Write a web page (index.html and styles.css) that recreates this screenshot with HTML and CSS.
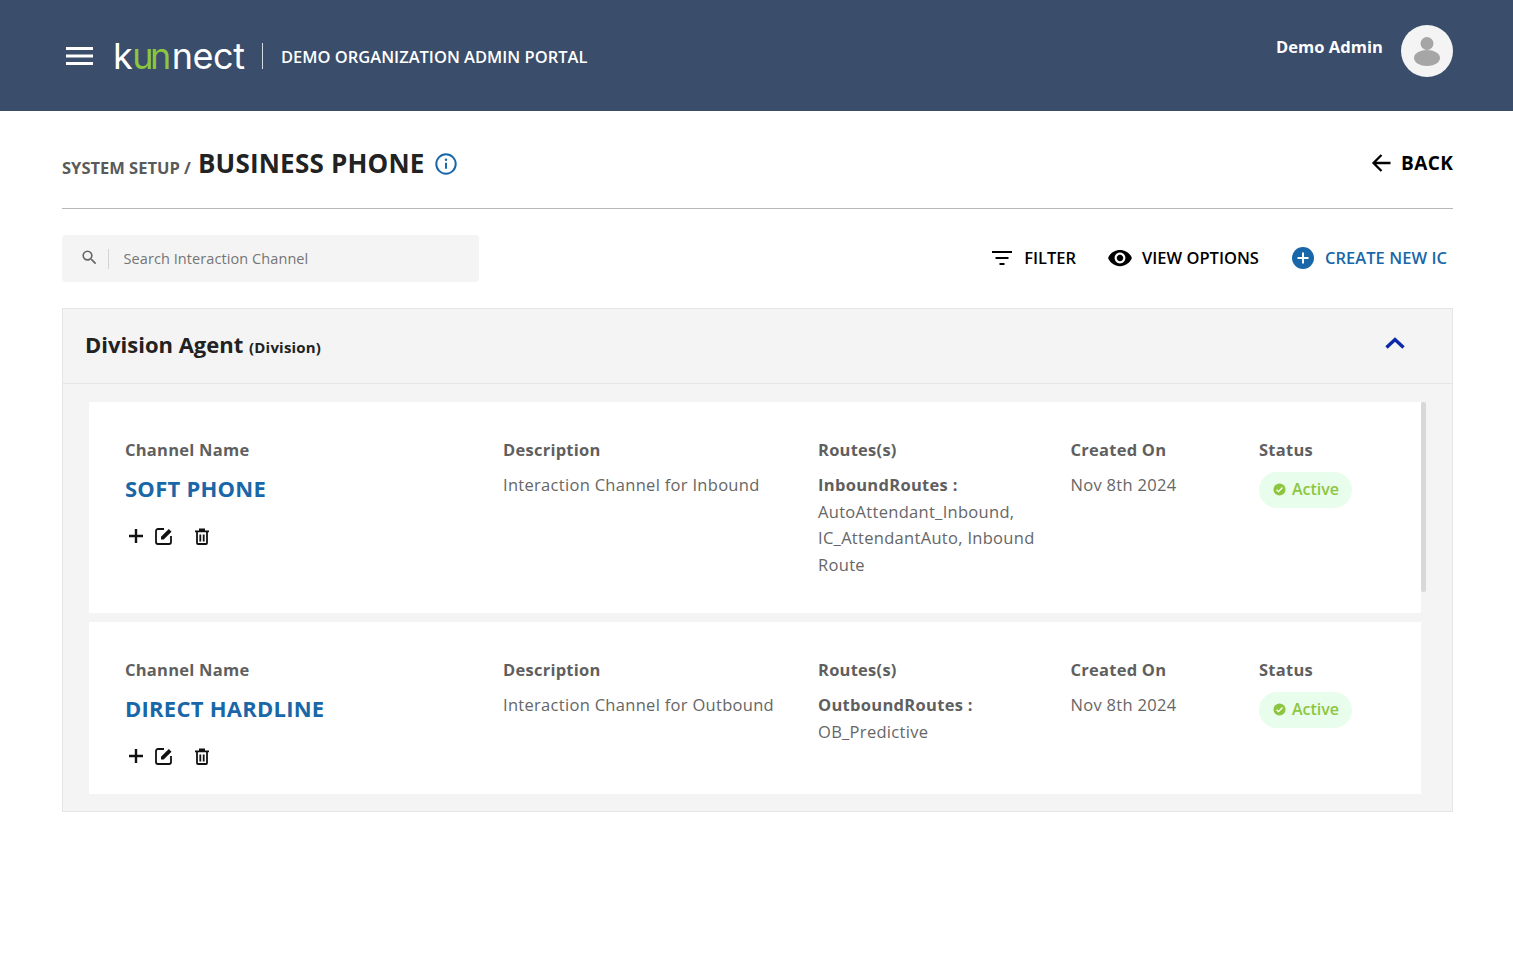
FILE: index.html
```html
<!DOCTYPE html>
<html lang="en">
<head>
<meta charset="utf-8">
<title>Business Phone</title>
<link rel="stylesheet" href="styles.css">
</head>
<body>
<header class="topbar">
  <div class="brand">
    <svg class="menu-icon" viewBox="0 0 27 18"><path d="M0 1.500h27M0 9h27M0 16.500h27" stroke="#fff" stroke-width="3"/></svg>
    <span class="logo">k<span class="logo-green">u<span class="logo-join">n</span></span><span class="logo-rest">nect</span></span>
    <span class="brand-divider"></span>
    <span class="portal">DEMO ORGANIZATION ADMIN PORTAL</span>
  </div>
  <div class="user">
    <span class="user-name">Demo Admin</span>
    <span class="avatar">
      <svg viewBox="0 0 52 52" width="52" height="52"><circle cx="26" cy="18.500" r="6.500" fill="#a6a6a6"/><ellipse cx="26" cy="33" rx="13" ry="8" fill="#a6a6a6"/></svg>
    </span>
  </div>
</header>
<main class="page">
  <section class="title-row">
    <h1 class="title"><span class="crumb">SYSTEM SETUP /</span> <span class="title-main">BUSINESS PHONE</span>
      <svg class="info-icon" viewBox="0 0 22 22"><circle cx="11" cy="11" r="9.700" fill="none" stroke="#1967a8" stroke-width="2"/><path d="M11 9.800v6" stroke="#1967a8" stroke-width="2"/><circle cx="11" cy="6.700" r="1.200" fill="#1967a8"/></svg>
    </h1>
    <a class="back">
      <svg class="back-icon" viewBox="0 0 20 20"><path d="M19.500 10H2.500M10.500 2l-8 8 8 8" fill="none" stroke="#000" stroke-width="2.300"/></svg>
      BACK
    </a>
  </section>
  <section class="toolbar">
    <div class="search">
      <svg class="search-icon" viewBox="0 0 24 24"><path fill="#666" d="M15.500 14h-.79l-.28-.27A6.470 6.470 0 0 0 16 9.500 6.500 6.500 0 1 0 9.500 16c1.610 0 3.090-.59 4.230-1.570l.27.28v.79l5 4.990L20.490 19l-4.990-5zm-6 0C7.010 14 5 11.990 5 9.500S7.010 5 9.500 5 14 7.010 14 9.500 11.990 14 9.500 14z"/></svg>
      <span class="search-sep"></span>
      <span class="search-text">Search Interaction Channel</span>
    </div>
    <div class="actions">
      <a class="action">
        <svg class="action-icon-filter" viewBox="0 0 20 14"><path d="M0 1h20M3.500 7h13M7.500 13h5" stroke="#000" stroke-width="2"/></svg>
        FILTER
      </a>
      <a class="action">
        <svg class="action-icon-eye" viewBox="0 0 24 24"><path d="M12 4.500C7 4.500 2.730 7.610 1 12c1.730 4.390 6 7.500 11 7.500s9.270-3.110 11-7.500c-1.730-4.390-6-7.500-11-7.500zM12 17c-2.760 0-5-2.240-5-5s2.240-5 5-5 5 2.240 5 5-2.240 5-5 5zm0-8c-1.660 0-3 1.340-3 3s1.340 3 3 3 3-1.340 3-3-1.340-3-3-3z"/></svg>
        VIEW OPTIONS
      </a>
      <a class="action action-primary">
        <svg class="action-icon-plus" viewBox="0 0 22 22"><circle cx="11" cy="11" r="11" fill="#1967a8"/><path d="M11 5.500v11M5.500 11h11" stroke="#fff" stroke-width="2"/></svg>
        CREATE NEW IC
      </a>
    </div>
  </section>
  <section class="panel">
    <div class="panel-head">
      <h2 class="panel-title">Division Agent <small class="panel-sub">(Division)</small></h2>
      <svg class="chevron" viewBox="0 0 20 12"><path d="M1.500 10.500 10 2.500l8.500 8" fill="none" stroke="#0a2aa8" stroke-width="3.400"/></svg>
    </div>
    <div class="panel-body">
      <span class="scroll-thumb"></span>
      <article class="card card-tall">
        <div class="col">
          <div class="label">Channel Name</div>
          <div class="channel">SOFT PHONE</div>
          <div class="row-icons">
            <svg class="ic-plus" viewBox="0 0 16 16"><path d="M8 1v14M1 8h14" stroke="#111" stroke-width="2.400"/></svg>
            <svg class="ic-edit" viewBox="0 0 18 18"><path d="M9 2H3a2 2 0 0 0-2 2v11a2 2 0 0 0 2 2h11a2 2 0 0 0 2-2V9" fill="none" stroke="#111" stroke-width="1.800"/><path d="M6 12.500V9.800L13.800 2l2.700 2.700L8.700 12.500z" fill="#111"/></svg>
            <svg class="ic-trash" viewBox="0 0 14 17"><path d="M0 2.500h14V4.300H0zM4 .5h6v2H4z" fill="#111"/><path d="M2 4v11a1 1 0 0 0 1 1h8a1 1 0 0 0 1-1V4" fill="none" stroke="#111" stroke-width="1.800"/><path d="M5.300 6.500v7M8.700 6.500v7" stroke="#111" stroke-width="1.800"/></svg>
          </div>
        </div>
        <div class="col">
          <div class="label">Description</div>
          <div class="value">Interaction Channel for Inbound</div>
        </div>
        <div class="col">
          <div class="label">Routes(s)</div>
          <div class="value"><b class="route-name">InboundRoutes :</b><br>AutoAttendant_Inbound, IC_AttendantAuto, Inbound Route</div>
        </div>
        <div class="col">
          <div class="label">Created On</div>
          <div class="value">Nov 8th 2024</div>
        </div>
        <div class="col">
          <div class="label">Status</div>
          <span class="badge">
            <svg class="badge-icon" viewBox="0 0 14 14"><circle cx="7" cy="7" r="6.500" fill="#8cc63f"/><path d="M3.800 7.200 6 9.300l4.200-4.400" fill="none" stroke="#fff" stroke-width="1.500"/></svg>
            Active
          </span>
        </div>
      </article>
      <article class="card">
        <div class="col">
          <div class="label">Channel Name</div>
          <div class="channel">DIRECT HARDLINE</div>
          <div class="row-icons">
            <svg class="ic-plus" viewBox="0 0 16 16"><path d="M8 1v14M1 8h14" stroke="#111" stroke-width="2.400"/></svg>
            <svg class="ic-edit" viewBox="0 0 18 18"><path d="M9 2H3a2 2 0 0 0-2 2v11a2 2 0 0 0 2 2h11a2 2 0 0 0 2-2V9" fill="none" stroke="#111" stroke-width="1.800"/><path d="M6 12.500V9.800L13.800 2l2.700 2.700L8.700 12.500z" fill="#111"/></svg>
            <svg class="ic-trash" viewBox="0 0 14 17"><path d="M0 2.500h14V4.300H0zM4 .5h6v2H4z" fill="#111"/><path d="M2 4v11a1 1 0 0 0 1 1h8a1 1 0 0 0 1-1V4" fill="none" stroke="#111" stroke-width="1.800"/><path d="M5.300 6.500v7M8.700 6.500v7" stroke="#111" stroke-width="1.800"/></svg>
          </div>
        </div>
        <div class="col">
          <div class="label">Description</div>
          <div class="value">Interaction Channel for Outbound</div>
        </div>
        <div class="col">
          <div class="label">Routes(s)</div>
          <div class="value"><b class="route-name">OutboundRoutes :</b><br>OB_Predictive</div>
        </div>
        <div class="col">
          <div class="label">Created On</div>
          <div class="value">Nov 8th 2024</div>
        </div>
        <div class="col">
          <div class="label">Status</div>
          <span class="badge">
            <svg class="badge-icon" viewBox="0 0 14 14"><circle cx="7" cy="7" r="6.500" fill="#8cc63f"/><path d="M3.800 7.200 6 9.300l4.200-4.400" fill="none" stroke="#fff" stroke-width="1.500"/></svg>
            Active
          </span>
        </div>
      </article>
    </div>
  </section>
</main>
</body>
</html>
```
FILE: styles.css
```css
* { box-sizing: border-box; }
html, body { margin: 0; height: 961px; overflow: hidden; }
body { font-family: "Open Sans", sans-serif; background: #fff; color: #222; }

.topbar { height: 111px; background: #3a4d6b; display: flex; justify-content: space-between; padding: 25px 60px 0 66px; color: #fff; }
.brand { display: flex; align-items: center; height: 62px; }
.menu-icon { width: 27px; height: 18px; display: block; }
.logo { font-family: Inter, sans-serif; font-weight: 400; font-size: 36px; line-height: 62px; letter-spacing: -0.5px; margin-left: 20px; width: 132px; color: #fff; white-space: nowrap; }
.logo-green { color: #8cc63f; }
.logo-join { margin-left: -3px; }
.logo-rest { margin-left: 1px; }
.brand-divider { width: 1px; height: 26px; background: #d5dae2; margin-left: 17px; }
.portal { font-size: 16.500px; font-weight: 600; margin-left: 18px; }
.user { display: flex; align-items: flex-start; }
.user-name { font-size: 16.500px; font-weight: 700; line-height: 44px; margin-right: 18px; letter-spacing: 0.05px; }
.avatar { width: 52px; height: 52px; border-radius: 50%; background: #f4f4f4; display: block; }
.avatar svg { display: block; }

.page { padding: 0 60px 0 62px; }
.title-row { height: 98px; border-bottom: 1px solid #b8b8b8; display: flex; justify-content: space-between; align-items: flex-start; padding-top: 33px; }
.title { margin: 0; display: flex; align-items: baseline; font-weight: 700; }
.crumb { font-size: 16.500px; color: #5a5a5a; margin-right: 7px; font-weight: 700; position: relative; top: 1px; }
.title-main { font-size: 26px; line-height: 38px; color: #222; letter-spacing: 0.2px; }
.info-icon { width: 22px; height: 22px; margin: 2px 0 0 10.500px; align-self: center; }
.back { display: flex; align-items: center; font-size: 19px; font-weight: 700; color: #000; line-height: 38px; letter-spacing: 0.5px; margin-right: -0.5px; }
.back-icon { width: 20px; height: 20px; margin-right: 10px; }

.toolbar { display: flex; justify-content: space-between; align-items: center; margin-top: 26px; height: 47px; }
.search { width: 417px; height: 47px; background: #f4f4f4; border-radius: 4px; display: flex; align-items: center; padding-left: 18px; }
.search-icon { width: 19px; height: 19px; margin-top: -2px; }
.search-sep { width: 1px; height: 20px; background: #d4d4d4; margin-left: 9px; }
.search-text { font-size: 14.500px; color: #757575; margin-left: 14.500px; letter-spacing: 0.08px; margin-top: -1px; }
.actions { display: flex; align-items: center; gap: 32px; padding-right: 6px; margin-top: -2px; }
.action { display: flex; align-items: center; font-size: 16.500px; font-weight: 600; color: #000; }
.action-primary { color: #1967a8; letter-spacing: 0.05px; margin-left: 1px; }
.action-icon-filter { width: 20px; height: 14px; margin-right: 12px; }
.action-icon-eye { width: 26px; height: 26px; margin: 0 9px 0 -1px; }
.action-icon-plus { width: 22px; height: 22px; margin-right: 11px; }

.panel { margin-top: 26px; height: 504px; background: #f4f4f4; border: 1px solid #e6e6e6; }
.panel-head { height: 75px; border-bottom: 1px solid #e6e6e6; display: flex; justify-content: space-between; align-items: center; padding: 0 22px; }
.panel-title { margin: 0 0 4px; font-size: 22px; font-weight: 700; color: #222; }
.panel-sub { font-size: 15px; font-weight: 700; letter-spacing: 0.2px; }
.chevron { width: 20px; height: 12px; margin: 0 25px 7px 0; }
.panel-body { position: relative; padding: 18px 31px 0 26px; }
.scroll-thumb { position: absolute; top: 18px; right: 26px; width: 5px; height: 190px; background: #d8d8d8; border-radius: 2px; }
.card { background: #fff; display: grid; grid-template-columns: 378px 315px 252.500px 188.500px 1fr; padding: 36px 36px 0; height: 172px; margin-bottom: 9px; }
.card-tall { height: 211px; }
.label { font-size: 16.500px; font-weight: 700; color: #5f5f5f; line-height: 24px; letter-spacing: 0.25px; }
.channel { font-size: 22px; font-weight: 700; color: #1967a8; line-height: 30px; margin-top: 11px; letter-spacing: 0.25px; }
.row-icons { display: flex; align-items: center; margin-top: 24px; padding-left: 3px; }
.ic-plus { width: 16px; height: 16px; }
.ic-edit { width: 18px; height: 18px; margin-left: 11px; }
.ic-trash { width: 14px; height: 17px; margin-left: 22px; }
.value { font-size: 16.500px; line-height: 26.500px; color: #666; margin-top: 10px; letter-spacing: 0.3px; }
.route-name { font-weight: 700; color: #5f5f5f; }
.badge { display: inline-flex; align-items: center; height: 36px; padding: 0 13px 2px 14px; margin-top: 10px; border-radius: 18px; background: #e9fdec; color: #8cc63f; font-size: 16px; font-weight: 600; }
.badge-icon { width: 13px; height: 13px; margin: 0 6px 0 0; }
```
